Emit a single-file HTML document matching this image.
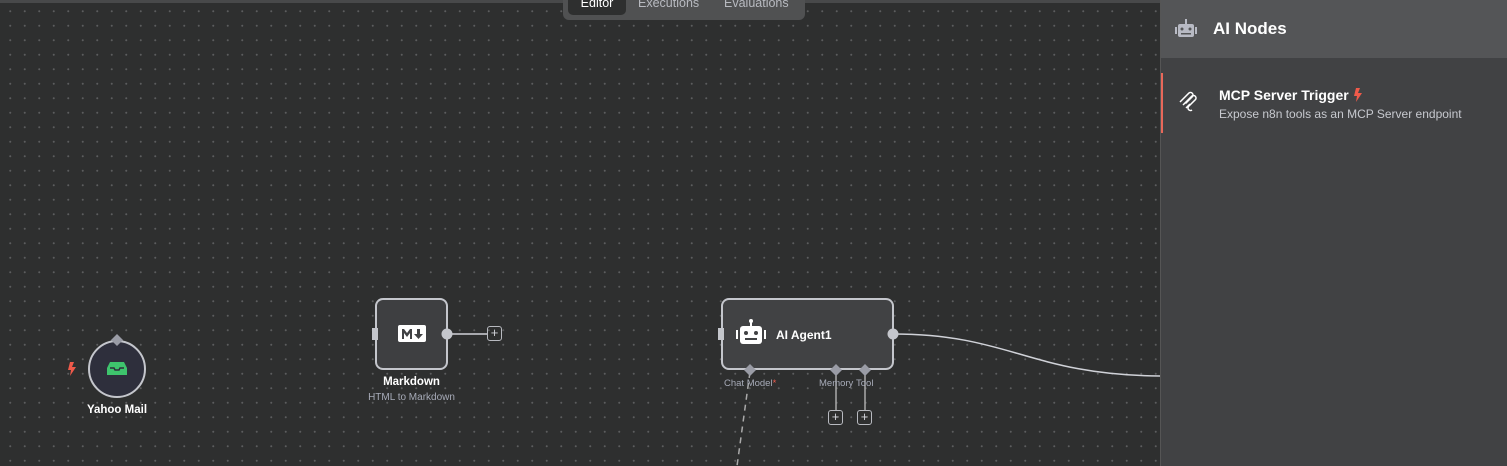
<!DOCTYPE html>
<html><head><meta charset="utf-8"><style>
*{margin:0;padding:0;box-sizing:border-box}
body{width:1507px;height:466px;overflow:hidden;position:relative;background:#2e2f2f;font-family:"Liberation Sans",sans-serif;
background-image:radial-gradient(circle,#5c5d5e 0.8px,transparent 1.2px);background-size:14.5px 14.5px;background-position:3px 4px}
.top{position:absolute;left:0;top:0;width:1160px;height:3px;background:#48494a}
.tabs{position:absolute;left:563px;top:-8px;width:242px;height:28px;background:#505152;border-radius:6px;font-size:12.5px;color:#b8bac0}
.tabs .ed{position:absolute;left:5px;top:0;width:58px;height:23px;background:#2e2f2f;border-radius:5px;color:#fff;text-align:center;line-height:22px}
.tabs span{position:absolute;top:0;line-height:22px}
.panel{position:absolute;left:1160px;top:0;width:347px;height:466px;background:#414244;border-left:1px solid #555}
.ph{height:58px;background:#545557;position:relative}
.ph b{position:absolute;left:52px;top:19px;font-size:17px;color:#fff}
.item{position:absolute;left:0;top:73px;width:347px;height:60px;border-left:2px solid #e8685a}
.item .t{position:absolute;left:56px;top:14px;font-size:14px;color:#fff;font-weight:bold}
.item .d{position:absolute;left:56px;top:34px;font-size:12px;color:#c7c9cf}
.node{position:absolute;border:2px solid #c4c6cc;background:#414244;border-radius:8px}
.lbl{position:absolute;color:#fff;font-weight:bold;font-size:11.5px;text-align:center}
.sub{position:absolute;color:#a7abb8;font-size:10px;text-align:center}
.plus{position:absolute;width:15px;height:15px;border:1.5px solid #b8bac0;border-radius:3px;color:#d0d2d8;font-size:13px;line-height:11px;text-align:center}
</style></head><body>
<div class="top"></div>
<div class="tabs"><div class="ed">Editor</div><span style="left:75px">Executions</span><span style="left:161px">Evaluations</span></div>

<svg style="position:absolute;left:0;top:0" width="1160" height="466">
<path d="M893 334 C1010 334 1030 375 1160 376" stroke="#d0d2d8" stroke-width="1.5" fill="none"/>
<line x1="447" y1="334" x2="488" y2="334" stroke="#d0d2d8" stroke-width="1.5"/>
<line x1="750" y1="372" x2="737" y2="466" stroke="#aaa" stroke-width="1.5" stroke-dasharray="6 5"/>
<line x1="836" y1="372" x2="836" y2="410" stroke="#aaa" stroke-width="1.5"/>
<line x1="865" y1="372" x2="865" y2="410" stroke="#aaa" stroke-width="1.5"/>
<circle cx="117" cy="369" r="28" fill="#2e2f3c" stroke="#c4c6cc" stroke-width="2"/>
<path d="M117 334l6 6-6 6-6-6z" fill="#9a9ca6"/>
<path d="M110 362h14l3 6v7h-20v-7z" fill="#3ec46d"/>
<path d="M110 368h4l1 2h4l1-2h4" stroke="#2e2f3c" stroke-width="1.5" fill="none"/>
<path d="M111 366l2-3h8l2 3" stroke="#2e2f3c" stroke-width="0" fill="none"/>
<path d="M70 362h4l-2 5h4l-6 9 1-6h-3z" fill="#ef5a4a"/>
</svg>

<div class="node" style="left:375px;top:298px;width:73px;height:72px;background:#3e3f41"></div>
<div class="lbl" style="left:360px;top:376px;width:103px">Markdown</div>
<div class="sub" style="left:350px;top:392px;width:123px">HTML to Markdown</div>
<div class="plus" style="left:487px;top:326px">+</div>

<div class="node" style="left:721px;top:298px;width:173px;height:72px"></div>
<svg style="position:absolute;left:0;top:0" width="1160" height="466">
<rect x="398" y="325" width="28" height="17" rx="2" fill="#fff"/>
<path d="M402 339v-10h2l3 4 3-4h2v10h-2v-6l-3 4-3-4v6z" fill="#414244"/>
<path d="M417 329h3v5h3l-4.5 5-4.5-5h3z" fill="#414244"/>
<g fill="#fff"><rect x="740" y="326" width="22" height="18" rx="3"/><rect x="750" y="321" width="2" height="5"/><circle cx="751" cy="321" r="2"/><rect x="736" y="330" width="2" height="9"/><rect x="764" y="330" width="2" height="9"/></g>
<g fill="#414244"><circle cx="746" cy="333" r="2"/><circle cx="756" cy="333" r="2"/><rect x="745" y="338" width="12" height="2"/></g>
<path d="M750 364l6 6-6 6-6-6z M836 364l6 6-6 6-6-6z M865 364l6 6-6 6-6-6z" fill="#9a9ca6"/>
<circle cx="893" cy="334" r="5.5" fill="#c4c6cc"/><rect x="718" y="328" width="6" height="12" fill="#c4c6cc"/><circle cx="447" cy="334" r="5.5" fill="#c4c6cc"/><rect x="372" y="328" width="6" height="12" fill="#c4c6cc"/>
</svg>
<div class="lbl" style="left:776px;top:328px;font-size:12px">AI Agent1</div>
<div class="sub" style="left:724px;top:378px;font-size:9.5px">Chat Model<span style="color:#ef5a4a">*</span></div>
<div class="sub" style="left:819px;top:378px;font-size:9.5px">Memory</div>
<div class="sub" style="left:856px;top:378px;font-size:9.5px">Tool</div>
<div class="plus" style="left:828px;top:410px">+</div>
<div class="plus" style="left:857px;top:410px">+</div>
<div class="lbl" style="left:77px;top:404px;width:80px">Yahoo Mail</div>

<div class="panel">
<div class="ph"><b>AI Nodes</b></div>
<div class="item"><div class="t">MCP Server Trigger</div><div class="d">Expose n8n tools as an MCP Server endpoint</div></div>
</div>
<svg style="position:absolute;left:1160px;top:0" width="347" height="140">
<g fill="#b8bac4"><rect x="18" y="24" width="16" height="13" rx="2"/><rect x="25" y="19" width="2" height="5"/><rect x="15" y="27" width="2" height="7"/><rect x="35" y="27" width="2" height="7"/></g>
<g fill="#545557"><circle cx="22" cy="29" r="1.5"/><circle cx="30" cy="29" r="1.5"/><rect x="21" y="33" width="10" height="1.5"/></g>
<path d="M20 102l9-9a2.5 2.5 0 0 1 3.5 3.5l-7 7M23 105l9-9a2.5 2.5 0 0 1 3.5 3.5l-7 7a2.5 2.5 0 0 0 3.5 3.5M26 108l4-4" stroke="#fff" stroke-width="1.5" fill="none"/>
<path d="M196 88h4l-2 5h4l-6 9 1-6h-3z" fill="#ef5a4a"/>
</svg>
</body></html>
